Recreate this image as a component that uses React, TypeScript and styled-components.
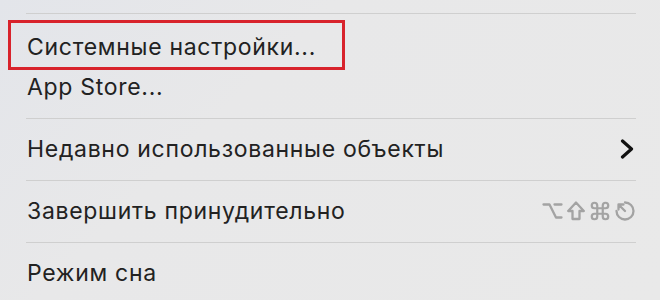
import React from "react";
import styled, { createGlobalStyle } from "styled-components";
import { Command } from "lucide-react";

const GlobalStyle = createGlobalStyle`
  html, body {
    margin: 0;
    padding: 0;
    width: 660px;
    height: 300px;
    overflow: hidden;
  }
  body {
    background: #e8e8e8;
    font-family: "Inter", "Liberation Sans", Arial, sans-serif;
  }
`;

const Menu = styled.div`
  width: 660px;
  height: 300px;
  box-sizing: border-box;
  padding-top: 2px;
  display: flex;
  flex-direction: column;
  background: linear-gradient(135deg, #e3e5ea 0%, #e8e8e9 35%, #e9e9e9 100%);
`;

const Separator = styled.div<{ $after?: number }>`
  height: ${(p) => 22 + (p.$after ?? 0)}px;
  flex: none;
  box-sizing: border-box;
  padding: 11px 24px 0 26px;
  &::before {
    content: "";
    display: block;
    height: 1px;
    background: #cfcfcf;
  }
`;

const Item = styled.div<{ $highlight?: boolean }>`
  position: relative;
  height: 40px;
  flex: none;
  display: flex;
  align-items: center;
  justify-content: space-between;
  padding: 0 25px 0 27px;
  font-size: 23px;
  letter-spacing: 0.7px;
  color: #222;
  &::after {
    content: "";
    display: ${(p) => (p.$highlight ? "block" : "none")};
    position: absolute;
    left: 8px;
    top: -7px;
    width: 337px;
    height: 50px;
    box-sizing: border-box;
    border: 3px solid #d8232c;
  }
`;

const Label = styled.span`
  white-space: nowrap;
`;

const Shortcut = styled.span`
  display: flex;
  align-items: center;
  gap: 4px;
  color: #a3a3a3;
`;

const Glyph = styled.svg`
  display: block;
  flex: none;
`;

const stroke = {
  fill: "none",
  stroke: "currentColor",
  strokeWidth: 2.3,
  strokeLinecap: "round" as const,
  strokeLinejoin: "round" as const,
};

const Chevron = () => (
  <Glyph width="16" height="20" viewBox="0 0 16 20">
    <polyline points="3.5,2 12.5,10 3.5,18" {...stroke} stroke="#111" strokeWidth={3.2} />
  </Glyph>
);

const OptionKey = () => (
  <Glyph width="21" height="20" viewBox="0 0 21 20">
    <path d="M1.5 3.5 H7.5 L14 16.5 H19.5 M12.5 3.5 H19.5" {...stroke} />
  </Glyph>
);

const ShiftKey = () => (
  <Glyph width="18" height="20" viewBox="0 0 18 20">
    <path d="M9 1.5 L16.8 10 H12.5 V18 H5.5 V10 H1.2 Z" {...stroke} />
  </Glyph>
);

const EscapeKey = () => (
  <Glyph width="20" height="20" viewBox="0 0 20 20">
    <path d="M10 1.5 A8.5 8.5 0 1 1 1.5 10" {...stroke} />
    <path d="M3.5 3.5 L10 10 M3.5 8.5 V3.5 H8.5" {...stroke} />
  </Glyph>
);

export default function App() {
  return (
    <>
      <GlobalStyle />
      <Menu>
        <Separator $after={3} />
        <Item $highlight>
          <Label>Системные настройки...</Label>
        </Item>
        <Item>
          <Label>App Store...</Label>
        </Item>
        <Separator />
        <Item>
          <Label>Недавно использованные объекты</Label>
          <Chevron />
        </Item>
        <Separator />
        <Item>
          <Label>Завершить принудительно</Label>
          <Shortcut>
            <OptionKey />
            <ShiftKey />
            <Command size={22} strokeWidth={2.4} />
            <EscapeKey />
          </Shortcut>
        </Item>
        <Separator />
        <Item>
          <Label>Режим сна</Label>
        </Item>
      </Menu>
    </>
  );
}
